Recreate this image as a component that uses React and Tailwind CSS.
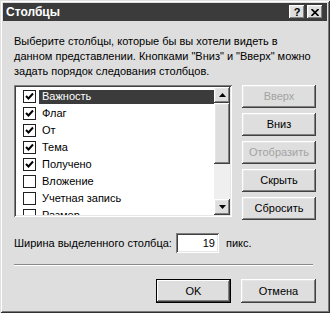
import React from "react";

const raised =
  "shadow-[inset_-1px_-1px_#404040,inset_1px_1px_#ffffff,inset_-2px_-2px_#808080,inset_2px_2px_#e6e6e6]";
const sunken =
  "shadow-[inset_1px_1px_#808080,inset_-1px_-1px_#ffffff,inset_2px_2px_#404040,inset_-2px_-2px_#e6e6e6]";

function Check({ on }) {
  return (
    <div className="w-[13px] h-[13px] bg-white border border-[#202020] flex items-center justify-center shrink-0">
      {on && (
        <svg width="9" height="9" viewBox="0 0 9 9">
          <path d="M1 4 L3.5 6.5 L8 1.5" fill="none" stroke="#000" strokeWidth="2" />
        </svg>
      )}
    </div>
  );
}

const rows = [
  ["Важность", true, true],
  ["Флаг", true],
  ["От", true],
  ["Тема", true],
  ["Получено", true],
  ["Вложение", false],
  ["Учетная запись", false],
  ["Размер", false],
];

function Btn({ children, disabled, def, className = "" }) {
  return (
    <div
      className={
        "flex items-center justify-center " +
        (def
          ? "border border-black shadow-[inset_-1px_-1px_#404040,inset_1px_1px_#ffffff,inset_-2px_-2px_#808080] "
          : raised + " ") +
        (disabled ? "text-[#a3a3a3] " : "text-black ") +
        className
      }
    >
      {children}
    </div>
  );
}

export default function App() {
  return (
    <div
      className={
        "w-[330px] h-[313px] bg-[#dedede] flex flex-col font-['Liberation_Sans',sans-serif] text-[11px] text-black overflow-hidden shadow-[inset_1px_1px_#e0e0e0,inset_-1px_-1px_#303030,inset_2px_2px_#ffffff,inset_-2px_-2px_#7a7a7a]"
      }
    >
      {/* title bar */}
      <div className="mx-[3px] mt-[3px] h-[18px] bg-[#3b3b3b] flex items-center justify-between pl-[3px] pr-[4px]">
        <span className="text-white font-bold text-[12px] leading-none">Столбцы</span>
        <div className="flex gap-[2px]">
          <div className={"w-[16px] h-[14px] bg-[#dedede] flex items-center justify-center font-bold text-[11px] leading-none " + raised}>
            ?
          </div>
          <div className={"w-[16px] h-[14px] bg-[#dedede] flex items-center justify-center " + raised}>
            <svg width="8" height="7" viewBox="0 0 8 7">
              <path d="M0.5 0 L7.5 7 M7.5 0 L0.5 7" stroke="#000" strokeWidth="1.6" />
            </svg>
          </div>
        </div>
      </div>

      {/* description */}
      <div className="pl-[14px] mt-[13px] leading-[15px]">
        <div>Выберите столбцы, которые бы вы хотели видеть в</div>
        <div>данном представлении. Кнопками "Вниз" и "Вверх" можно</div>
        <div>задать порядок следования столбцов.</div>
      </div>

      {/* list + buttons */}
      <div className="flex pl-[14px] mt-[6px]">
        <div className={"w-[218px] h-[132px] bg-white p-[2px] flex " + sunken}>
          <div className="flex-1 overflow-hidden pt-[1px]">
            {rows.map(([label, on, sel]) => (
              <div key={label} className="h-[17px] flex items-center">
                <div className="w-[7px]" />
                <Check on={on} />
                <div
                  className={
                    "ml-[3px] flex-1 h-[14px] flex items-center pl-[3px] " +
                    (sel ? "bg-[#3b3b3b] text-white" : "")
                  }
                >
                  {label}
                </div>
              </div>
            ))}
          </div>
          {/* scrollbar */}
          <div className="w-[16px] flex flex-col">
            <div className={"h-[16px] bg-[#dedede] flex items-center justify-center " + raised}>
              <svg width="7" height="4" viewBox="0 0 7 4">
                <path d="M3.5 0 L7 4 L0 4 Z" fill="#000" />
              </svg>
            </div>
            <div className={"h-[61px] bg-[#dedede] " + raised} />
            <div className="flex-1 bg-[#efefef]" />
            <div className={"h-[16px] bg-[#dedede] flex items-center justify-center " + raised}>
              <svg width="7" height="4" viewBox="0 0 7 4">
                <path d="M0 0 L7 0 L3.5 4 Z" fill="#000" />
              </svg>
            </div>
          </div>
        </div>
        <div className="ml-[10px] w-[74px] flex flex-col gap-[5px]">
          <Btn disabled className="h-[23px]">Вверх</Btn>
          <Btn className="h-[23px]">Вниз</Btn>
          <Btn disabled className="h-[23px]">Отобразить</Btn>
          <Btn className="h-[23px]">Скрыть</Btn>
          <Btn className="h-[23px]">Сбросить</Btn>
        </div>
      </div>

      {/* width row */}
      <div className="flex items-center pl-[14px] mt-[13px] h-[20px]">
        <div className="w-[162px]">Ширина выделенного столбца:</div>
        <div className={"w-[43px] h-[20px] bg-white flex items-center justify-end pr-[4px] " + sunken}>19</div>
        <div className="ml-[7px]">пикс.</div>
      </div>

      {/* separator */}
      <div className="ml-[14px] w-[299px] mt-[11px] h-[2px] border-t border-t-[#8a8a8a] border-b border-b-white" />

      {/* bottom buttons */}
      <div className="flex justify-end pr-[14px] mt-[13px] gap-[10px]">
        <Btn def className="w-[75px] h-[24px]">OK</Btn>
        <Btn className="w-[75px] h-[24px]">Отмена</Btn>
      </div>
    </div>
  );
}
